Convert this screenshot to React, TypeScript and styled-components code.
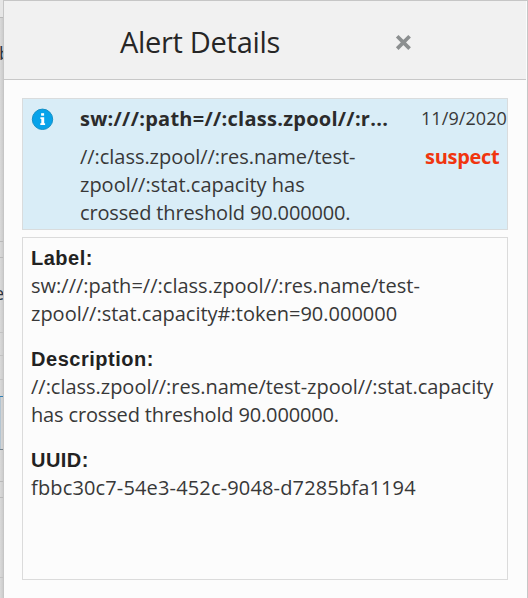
import React from 'react';
import styled, { createGlobalStyle } from 'styled-components';

const GlobalStyle = createGlobalStyle`
  *, *::before, *::after { box-sizing: border-box; }
  body {
    margin: 0;
    background: #dcdcdc;
    color: #383838;
    font-family: "Open Sans", "Noto Sans", sans-serif;
    overflow: hidden;
  }
`;

const Screen = styled.div`
  display: flex;
  width: 528px;
  height: 598px;
`;

const PageEdge = styled.div`
  display: flex;
  flex-direction: column;
  flex: none;
  width: 3px;
  overflow: hidden;
  background: linear-gradient(90deg, #dadada, #cccccc);
`;

const PageRow = styled.div<{ $height: number; $line?: string; $fill?: string; $drop?: number }>`
  flex: none;
  height: ${(p) => p.$height}px;
  padding-top: ${(p) => p.$drop ?? 0}px;
  border-bottom: 1px solid ${(p) => p.$line ?? '#b9b9b9'};
  background: ${(p) => p.$fill ?? 'transparent'};
  overflow: hidden;
`;

const PageText = styled.span<{ $shift: number }>`
  display: block;
  margin-left: ${(p) => p.$shift}px;
  font-size: 18px;
  line-height: 24px;
  color: #2b3540;
`;

const Panel = styled.section`
  display: flex;
  flex-direction: column;
  flex: 1;
  min-width: 0;
  border: 1px solid #c6c6c6;
  border-bottom: 0;
  background: #fcfcfc;
`;

const Header = styled.header`
  display: flex;
  align-items: center;
  flex: none;
  height: 79px;
  margin-right: 1px;
  padding: 3px 0 0 116px;
  border-bottom: 1px solid #c8c8c8;
  background: #f1f1f1;
`;

const Title = styled.h1`
  flex: none;
  width: 275px;
  margin: 0;
  font-size: 29px;
  font-weight: 400;
  line-height: 40px;
  letter-spacing: -0.3px;
  color: #262626;
`;

const CloseButton = styled.button`
  display: flex;
  margin-top: 1px;
  padding: 0;
  border: 0;
  background: none;
  color: #8c8f90;
`;

const Body = styled.div`
  display: flex;
  flex-direction: column;
  gap: 7px;
  padding: 18px 19px 0 18px;
`;

const AlertCard = styled.article`
  display: grid;
  grid-template-columns: 57px 1fr 86px;
  height: 132px;
  border: 1px solid #d9dcdd;
  background: #d9edf7;
`;

const IconCell = styled.div`
  padding: 9px 0 0 8px;
`;

const Summary = styled.div`
  min-width: 0;
`;

const Line = styled.div<{ $spacing?: number }>`
  font-size: 20px;
  line-height: 28px;
  letter-spacing: ${(p) => p.$spacing ?? 0}px;
  white-space: nowrap;
`;

const AlertName = styled(Line)`
  height: 37px;
  padding-top: 6px;
  font-weight: 700;
  color: #2b2b2b;
`;

const SummaryText = styled.div`
  padding-top: 7px;
`;

const Status = styled.aside`
  display: flex;
  flex-direction: column;
`;

const AlertDate = styled.time`
  height: 44px;
  padding-top: 5px;
  font-size: 18px;
  line-height: 28px;
  letter-spacing: 0.08px;
  white-space: nowrap;
`;

const Severity = styled(Line)`
  padding-left: 4px;
  font-weight: 700;
  color: #f0350f;
`;

const Details = styled.div`
  display: flex;
  flex-direction: column;
  gap: 17px;
  height: 343px;
  padding: 6px 8px;
  border: 1px solid #dbdbdb;
`;

const Field = styled.section``;

const FieldName = styled.h2<{ $spacing: number }>`
  margin: 0;
  font: 700 20px/28px "Liberation Sans", Arial, sans-serif;
  letter-spacing: ${(p) => p.$spacing}px;
  color: #222;
`;

const InfoIcon = () => (
  <svg width="23" height="23" viewBox="0 0 23 23" aria-hidden="true">
    <circle cx="11.5" cy="11.3" r="10.2" fill="#07a3ea" stroke="#1590c6" strokeWidth="1" />
    <rect x="10.1" y="5.2" width="3" height="2.5" fill="#fff" />
    <path d="M9.4 9.3h3.8v6h.9v1.8H9.3v-1.8h1v-4.2h-.9z" fill="#fff" />
  </svg>
);

const CloseIcon = () => (
  <svg width="17" height="17" viewBox="0 0 17 17" aria-hidden="true">
    <path d="M2.2 2.2l12.4 12.4M14.6 2.2l-12.4 12.4" stroke="currentColor" strokeWidth="3.7" />
  </svg>
);

const fields = [
  {
    name: 'Label:',
    nameSpacing: 0.5,
    lines: [
      { text: 'sw:///:path=//:class.zpool//:res.name/test-', spacing: 0.01 },
      { text: 'zpool//:stat.capacity#:token=90.000000', spacing: 0 },
    ],
  },
  {
    name: 'Description:',
    nameSpacing: 0.53,
    lines: [
      { text: '//:class.zpool//:res.name/test-zpool//:stat.capacity', spacing: -0.02 },
      { text: 'has crossed threshold 90.000000.', spacing: -0.15 },
    ],
  },
  {
    name: 'UUID:',
    nameSpacing: 0.45,
    lines: [{ text: 'fbbc30c7-54e3-452c-9048-d7285bfa1194', spacing: 0.15 }],
  },
];

export default function App() {
  return (
    <>
      <GlobalStyle />
      <Screen>
        <PageEdge>
          <PageRow $height={18} $fill="#e6e6e6" />
          <PageRow $height={224} $drop={23}>
            <PageText $shift={-1}>b</PageText>
          </PageRow>
          <PageRow $height={16} />
          <PageRow $height={75} $line="#c2c2c2" $drop={23}>
            <PageText $shift={-6}>e</PageText>
          </PageRow>
          <PageRow $height={23} $line="#c2c2c2" />
          <PageRow $height={24} $line="#c2c2c2" />
          <PageRow
            $height={17}
            $line="#2f7fb5"
          />
          <PageRow $height={53} $line="#75838d" $fill="linear-gradient(90deg, #b4c5d2 1px, transparent 1px)" />
          <PageRow $height={32} />
          <PageRow $height={16} />
          <PageRow $height={80} $line="#c2c2c2" />
        </PageEdge>
        <Panel>
          <Header>
            <Title>Alert Details</Title>
            <CloseButton aria-label="Close">
              <CloseIcon />
            </CloseButton>
          </Header>
          <Body>
            <AlertCard>
              <IconCell>
                <InfoIcon />
              </IconCell>
              <Summary>
                <AlertName $spacing={0.27}>sw:///:path=//:class.zpool//:r...</AlertName>
                <SummaryText>
                  <Line $spacing={-0.04}>//:class.zpool//:res.name/test-</Line>
                  <Line $spacing={0}>zpool//:stat.capacity has</Line>
                  <Line $spacing={-0.15}>crossed threshold 90.000000.</Line>
                </SummaryText>
              </Summary>
              <Status>
                <AlertDate>11/9/2020</AlertDate>
                <Severity $spacing={-0.3}>suspect</Severity>
              </Status>
            </AlertCard>
            <Details>
              {fields.map((field) => (
                <Field key={field.name}>
                  <FieldName $spacing={field.nameSpacing}>{field.name}</FieldName>
                  {field.lines.map((line) => (
                    <Line key={line.text} $spacing={line.spacing}>
                      {line.text}
                    </Line>
                  ))}
                </Field>
              ))}
            </Details>
          </Body>
        </Panel>
      </Screen>
    </>
  );
}
